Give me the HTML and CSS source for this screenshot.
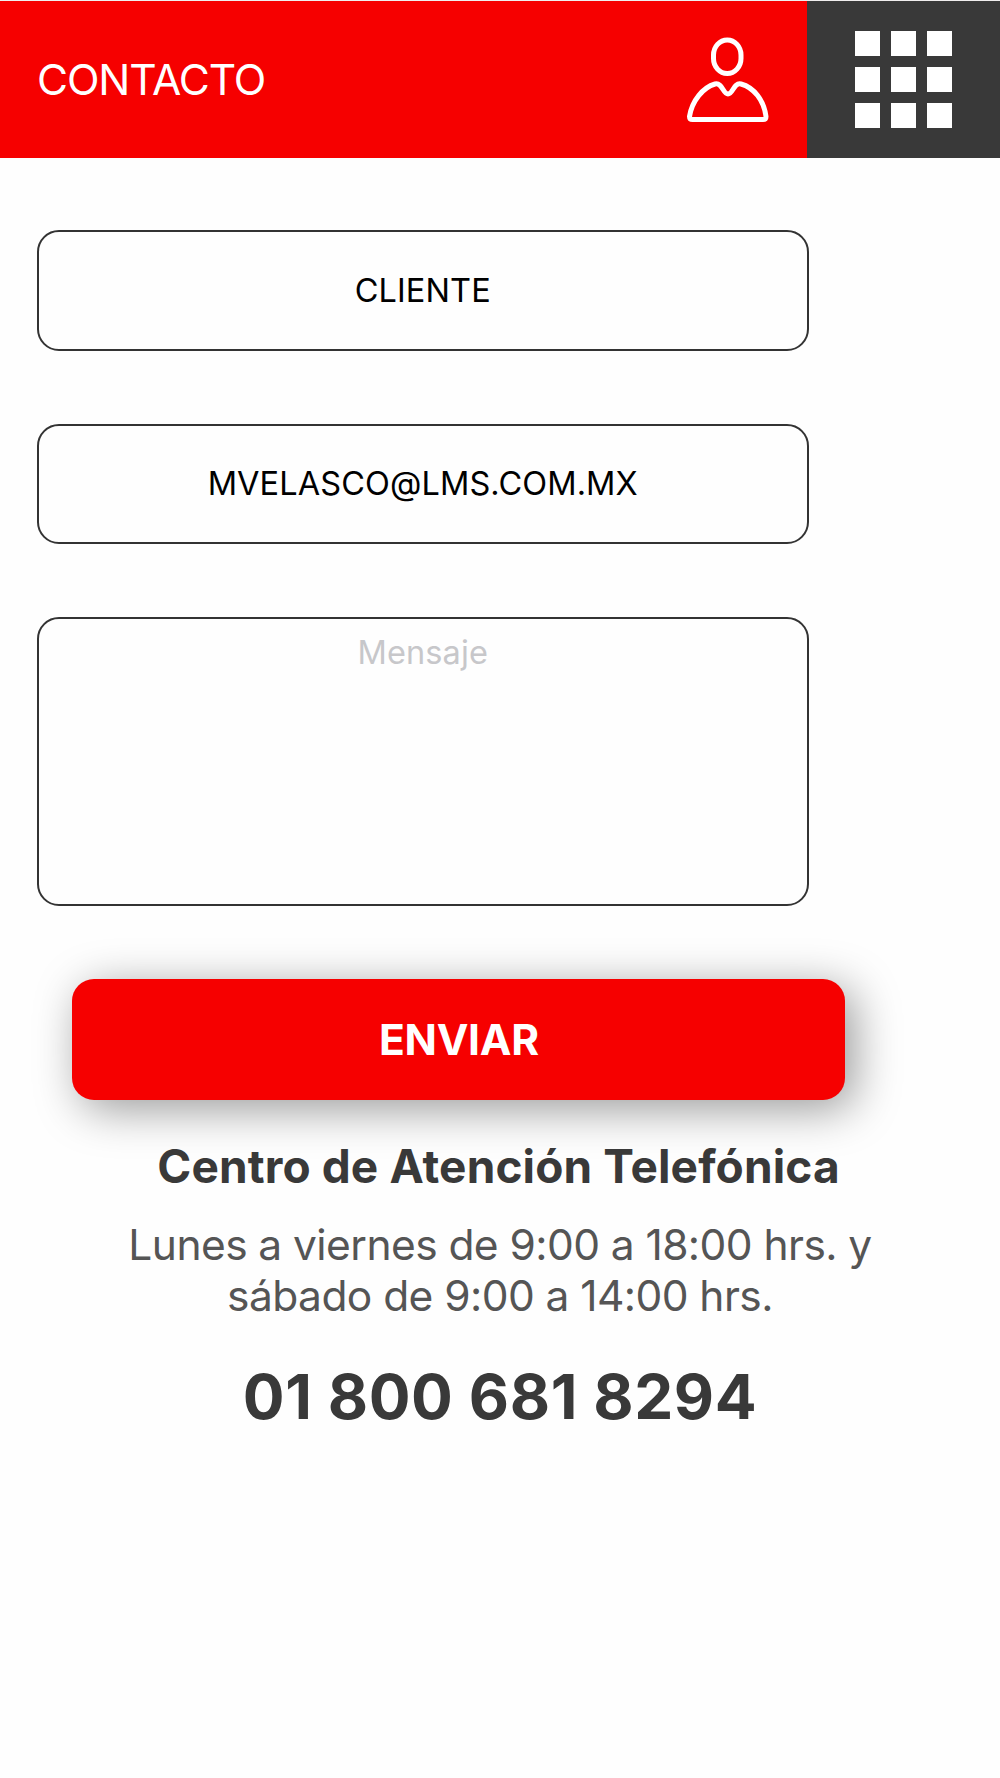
FILE: index.html
```html
<!DOCTYPE html>
<html lang="es">
<head>
    <meta charset="UTF-8">
    <meta name="viewport" content="width=device-width, initial-scale=1.0">
    <title>Contacto</title>
    <link rel="stylesheet" href="styles.css">
</head>
<body>
    <!-- Encabezado -->
    <header class="header">
        <div class="header-bar">
            <h1>CONTACTO</h1>
            <svg class="user-icon" viewBox="0 0 84 88" fill="none" stroke="#fff" stroke-width="5" stroke-linejoin="round">
                <rect x="27.5" y="4" width="27.5" height="33.5" rx="13.75" ry="15"/>
                <path d="M3.5 80.500C6 64.500 17 51.500 29 48C36 46 37 58 42 58C47 58 48 46 55 48C68 51.500 78 64.500 80 80.500Q80 83.500 77 83.500H6.500Q3.500 83.500 3.500 80.500Z"/>
            </svg>
        </div>
        <div class="menu">
            <span></span><span></span><span></span>
            <span></span><span></span><span></span>
            <span></span><span></span><span></span>
        </div>
    </header>

    <!-- Formulario de contacto -->
    <form class="form">
        <input class="field" type="text" value="CLIENTE">
        <input class="field" type="text" value="MVELASCO@LMS.COM.MX">
        <textarea class="field message" placeholder="Mensaje"></textarea>
        <button class="btn" type="button">ENVIAR</button>
    </form>

    <!-- Datos de atención -->
    <section class="info">
        <h2>Centro de Atención Telefónica</h2>
        <p>Lunes a viernes de 9:00 a 18:00 hrs. y<br>sábado de 9:00 a 14:00 hrs.</p>
        <a class="phone" href="tel:018006818294">01 800 681 8294</a>
    </section>
</body>
</html>
```
FILE: styles.css
```css
* {
    margin: 0;
    padding: 0;
    box-sizing: border-box;
    font-family: Inter, sans-serif;
}

body {
    background-color: #fefefe;
}

/* Encabezado */
.header {
    display: flex;
    height: 158px;
    border-top: 1px solid #f0eeee;
}

.header-bar {
    display: flex;
    align-items: center;
    justify-content: space-between;
    width: 807px;
    padding: 0 37px 0 37px;
    background-color: #f60000;
    color: white;
}

.header h1 {
    font-size: 42.5px;
    font-weight: 400;
    letter-spacing: -1.1px;
}

.user-icon {
    width: 84px;
    height: 88px;
}

.menu {
    flex: 1;
    display: grid;
    grid-template-columns: repeat(3, 24.5px);
    grid-auto-rows: 24.5px;
    gap: 11.5px;
    place-content: center;
    background-color: #393939;
}

.menu span {
    background-color: white;
}

/* Formulario */
.form {
    display: flex;
    flex-direction: column;
    gap: 72.7px;
    padding: 72.4px 36.5px 0;
}

.field {
    width: 772.5px;
    height: 120.5px;
    padding-bottom: 1px;
    border: 2px solid #333;
    border-radius: 22px;
    background: none;
    color: black;
    text-align: center;
    font-size: 32.5px;
    letter-spacing: 0.1px;
}

.message {
    height: 289.5px;
    padding-top: 14px;
    resize: none;
}

.message::placeholder {
    color: #c7c7ca;
}

.btn {
    width: 773px;
    height: 121px;
    margin-left: 35.9px;
    border: none;
    border-radius: 22px;
    background-color: #f60000;
    box-shadow: 9px 9px 46px rgba(0, 0, 0, 0.4);
    color: white;
    font-size: 42.5px;
    font-weight: 700;
    letter-spacing: -0.3px;
}

/* Datos de atención */
.info {
    padding-top: 38px;
    text-align: center;
    color: #393939;
}

.info h2 {
    padding-right: 3px;
    font-size: 46px;
    font-weight: 700;
    letter-spacing: 0.12px;
}

.info p {
    margin-top: 25px;
    font-size: 42.5px;
    line-height: 51.5px;
    letter-spacing: -0.57px;
    color: #555;
}

.phone {
    display: block;
    margin-top: 37px;
    font-size: 62px;
    font-weight: 700;
    letter-spacing: 0.6px;
    color: #393939;
    text-decoration: none;
}
```
